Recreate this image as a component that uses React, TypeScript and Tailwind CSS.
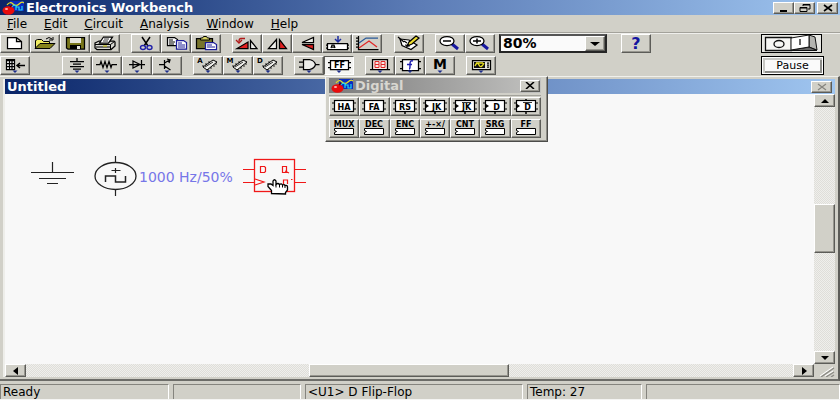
import React from "react";

const raised =
  "border border-t-white border-l-white border-r-[#5c5c58] border-b-[#5c5c58] bg-[#d1d0c8] shadow-[inset_-1px_-1px_0_#97968f]";
const sunken =
  "border border-t-[#5c5c58] border-l-[#5c5c58] border-r-white border-b-white bg-[#f4f4f2]";
const checker =
  "bg-[repeating-conic-gradient(#efefec_0_25%,#dfded9_0_50%)] bg-[length:2px_2px]";

type ToolProps = { label: string; pressed?: boolean; menu?: boolean; children: React.ReactNode };

function Tool({ label, pressed, menu, children }: ToolProps) {
  return (
    <button
      type="button"
      aria-label={label}
      className={`h-[19px] w-[30px] shrink-0 ${pressed ? sunken : raised}`}
    >
      <svg viewBox="1 1 28 17" className="block h-[17px] w-7" fill="none" stroke="#000" strokeWidth="1.250">
        {children}
        {menu && <path d="M12.500 14.500h5L15 17z" fill="#1c2c8c" stroke="none" />}
      </svg>
    </button>
  );
}

function Glyph({ x, y, size, children, fill = "#000" }: { x: number; y: number; size: number; children: string; fill?: string }) {
  return (
    <text x={x} y={y} fontSize={size} textAnchor="middle" fill={fill} stroke="none" fontWeight="700" fontFamily="'DejaVu Sans', sans-serif">
      {children}
    </text>
  );
}

function Group({ children, className = "" }: { children: React.ReactNode; className?: string }) {
  return <div className={`flex ${className}`}>{children}</div>;
}

function AppLogo() {
  return (
    <svg viewBox="0 0 22 14" className="h-[14px] w-[22px] shrink-0">
      <rect x="8" y="0" width="14" height="10" fill="#0a2bc0" />
      <path d="M5 4Q8 0 11 3T17 3T22 2" fill="none" stroke="#e8e020" strokeWidth="1.2" />
      <path d="M9 7Q12 2 15 6M14 9V6h3v3h3V5" fill="none" stroke="#20d8f0" strokeWidth="1.2" />
      <ellipse cx="6.500" cy="9.500" rx="6" ry="4.200" fill="#e80c0c" />
      <path d="M8 6l2-2" stroke="#600" strokeWidth="1.500" />
      <ellipse cx="4.500" cy="8" rx="1.600" ry="1" fill="#ffb0a8" />
    </svg>
  );
}

function Ram({ letter }: { letter: string }) {
  return (
    <>
      <path d="M10 11L20 4l4 2L14 14z" fill="#eeeeea" strokeWidth="1" />
      <path d="M10 9v2M13 7v2M16 5v2M15 13v2M18 11v2M21 9v2M23 7v2M12 11l8-5" strokeWidth="0.800" />
      <Glyph x={7} y={7} size={7}>{letter}</Glyph>
    </>
  );
}

function Lens({ plus }: { plus?: boolean }) {
  return (
    <>
      <path d="M17 10l6 5" stroke="#1818a0" strokeWidth="3" />
      <ellipse cx="12" cy="7" rx="7" ry="4.500" fill="#fff" />
      <path d={plus ? "M8 7h8M12 4.500v5" : "M8 7h8"} strokeWidth="1.500" />
    </>
  );
}

type ChipProps = { text: string; clocked?: boolean; bar?: boolean; vertical?: boolean };

function Chip({ text, clocked, bar, vertical }: ChipProps) {
  return (
    <>
      <rect x="5.500" y="3.500" width="19" height="11" fill="#fff" strokeWidth="1.200" />
      <path d="M3 6h2M3 12h2M25 6h2M25 12h2" />
      {vertical && <path d="M15 2v1M15 15v2" strokeWidth="1.500" />}
      {clocked && <path d="M6 7l3 2-3 2z" fill="#000" stroke="none" />}
      {bar && <path d="M12 5.500h9" strokeWidth="0.800" />}
      <Glyph x={clocked ? 16.5 : 15} y={12.5} size={8}>{text}</Glyph>
    </>
  );
}

const palette: (ChipProps & { label: string })[] = [
  { label: "Half adder", text: "HA" },
  { label: "Full adder", text: "FA" },
  { label: "RS flip-flop", text: "RS", vertical: true },
  { label: "JK flip-flop", text: "JK", clocked: true, vertical: true },
  { label: "JK flip-flop, active low", text: "JK", clocked: true, bar: true, vertical: true },
  { label: "D flip-flop", text: "D", clocked: true, vertical: true },
  { label: "D flip-flop, active low", text: "D", clocked: true, bar: true, vertical: true },
];

const families = ["MUX", "DEC", "ENC", "+-×/", "CNT", "SRG", "FF"];

function Palette() {
  const cell = `h-[19px] min-w-0 ${raised}`;
  return (
    <section
      aria-label="Digital"
      className="absolute left-[325px] top-[76px] w-[223px] border border-l-[#f4f4f2] border-t-[#f4f4f2] border-r-[#4c4c4a] border-b-[#4c4c4a] bg-[#d1d0c8] pb-[3px] pl-[3px] pr-[6px] pt-px shadow-[inset_-1px_-1px_0_#8c8b85]"
    >
      <header className="flex h-[15px] items-center bg-linear-to-r from-[#7c7c7c] to-[#c2c2c0] pl-0.5 pr-px">
        <AppLogo />
        <h2 className="ml-0.5 flex-1 text-[13px] font-bold leading-[15px] text-[#d8d6d0]">Digital</h2>
        <button type="button" aria-label="Close palette" className={`flex h-3 w-5 items-center justify-center ${raised}`}>
          <svg viewBox="0 0 10 7" className="h-[7px] w-[10px]"><path d="M1 0l8 7M9 0L1 7" stroke="#000" strokeWidth="1.600" /></svg>
        </button>
      </header>
      <div className="mt-0.5 grid grid-cols-7 border-t border-[#a3a29b] pt-px">
        {palette.map(({ label, ...chip }) => (
          <button key={label} type="button" aria-label={label} className={cell}>
            <svg viewBox="1 1 28 17" className="block h-[17px] w-7" fill="none" stroke="#000">
              <Chip {...chip} />
            </svg>
          </button>
        ))}
      </div>
      <div className="mt-[3px] grid grid-cols-7">
        {families.map((f) => (
          <button key={f} type="button" aria-label={f} className={cell}>
            <svg viewBox="1 1 28 17" className="block h-[17px] w-7" fill="none" stroke="#000">
              <Glyph x={15} y={8} size={8}>{f}</Glyph>
              <path d="M5.500 9.500h19v6h-19v-2l2-1-2-1z" fill="#fff" />
            </svg>
          </button>
        ))}
      </div>
    </section>
  );
}

function Schematic() {
  return (
    <svg className="absolute left-0 top-0 h-[130px] w-[320px]" viewBox="5 94 320 130" fill="none" stroke="#222">
      <path d="M52.500 162v10M31 172.500h43M39 178.500h27M47 183.500h11" strokeWidth="1.200" />
      <ellipse cx="115.500" cy="176" rx="20.500" ry="13.500" strokeWidth="1.300" />
      <path d="M115.500 156v7M115.500 189v7M111.500 170.500h9M115.500 168v5" strokeWidth="1.200" />
      <path d="M105.500 182v-6h10v6h10v-6" strokeWidth="1.500" />
      <text x="139" y="182" fontSize="14" fill="#7676e8" stroke="none" fontFamily="'DejaVu Sans', sans-serif">1000 Hz/50%</text>
      <g stroke="#f01818">
        <rect x="254.500" y="159.500" width="40" height="32" strokeWidth="1.300" />
        <path d="M243 169.500h11M243 182.500h11M295 169.500h11M295 182.500h11M255 179l9 3-9 3M260.500 166.500h4l1 1v4l-1 1h-4zM282.500 166.500h4v6h-4zM285 171l4 2M283.500 184v-4h4v4M291 179.500h1.500" strokeWidth="1.200" />
      </g>
      <path
        d="M271.500 193.500v-3l-3.500-4v-2.500h3l2 1.500v-4.500q1.500-2.500 3 0v3.500q2-2 3.500 0q2-1.500 3 .500q2-1 2.500.500q2.500-.500 2.500 1.500v3l-2 2.500v1.500z"
        fill="#fff"
        stroke="#000"
        strokeWidth="1.300"
      />
      <path d="M276 184.500v3M279.500 184.500v3M282.500 185v2.500M285 185.500v2.500" stroke="#000" />
    </svg>
  );
}

function Arrow({ d }: { d: string }) {
  return <svg viewBox="0 0 10 8" className="h-2 w-[10px]"><path d={d} /></svg>;
}

function ScrollButton({ label, d }: { label: string; d: string }) {
  return (
    <button type="button" aria-label={label} className={`flex h-[13px] w-[21px] shrink-0 items-center justify-center ${raised}`}>
      <Arrow d={d} />
    </button>
  );
}

const menus = ["File", "Edit", "Circuit", "Analysis", "Window", "Help"];
const titleBar = "bg-linear-to-r from-[#0a2468] via-[#5c7cb6] to-[#a0c6f0]";

export default function App() {
  return (
    <div className="relative flex h-screen flex-col overflow-hidden bg-[#d1d0c8] font-['DejaVu_Sans',sans-serif] text-[12px] text-black">
      <header className={`flex h-[15px] shrink-0 items-center pl-0.5 pr-0.5 ${titleBar}`}>
        <AppLogo />
        <h1 className="ml-0.5 flex-1 text-[13px] font-bold leading-[15px] text-white">Electronics Workbench</h1>
        <button type="button" aria-label="Minimize" className={`flex h-3 w-[21px] items-center justify-center ${raised}`}>
          <svg viewBox="0 0 12 8" className="h-2 w-3"><path d="M2 6h7v2H2z" /></svg>
        </button>
        <button type="button" aria-label="Restore" className={`flex h-3 w-[21px] items-center justify-center ${raised}`}>
          <svg viewBox="0 0 12 8" className="h-2 w-3" fill="none" stroke="#000"><path d="M4 2V.500h7v4.500H9M1 3.500h7v4H1zM4 1h7M1 4h7" /></svg>
        </button>
        <button type="button" aria-label="Close" className={`ml-0.5 flex h-3 w-[21px] items-center justify-center ${raised}`}>
          <svg viewBox="0 0 12 8" className="h-2 w-3"><path d="M2 1l8 6M10 1L2 7" stroke="#000" strokeWidth="1.600" /></svg>
        </button>
      </header>

      <nav className="flex h-[18px] shrink-0 items-center gap-[17px] border-b border-[#a3a29b] pl-[7px]">
        {menus.map((m) => (
          <button key={m} type="button" className="leading-4">
            <span className="underline underline-offset-1">{m[0]}</span>
            {m.slice(1)}
          </button>
        ))}
      </nav>

      <div className="flex shrink-0 justify-between border-t border-[#efefec] pr-4">
        <div className="flex flex-col gap-[3px] pb-px">
          <div className="flex gap-[11px]">
            <Group>
              <Tool label="New"><path d="M7.500 3.500h9l5 4v7h-14zM16.500 3.500v4h5" fill="#fff" /></Tool>
              <Tool label="Open">
                <path d="M5.500 14.500v-8l2-1h4l2 2h6v2" fill="#f0ec60" strokeWidth="1" />
                <path d="M5 14.500L10 9.500h15l-5 5z" fill="#86841c" strokeWidth="1" />
                <path d="M16 5q3-3 6 0M23 3v3h-4" strokeWidth="1" />
              </Tool>
              <Tool label="Save">
                <path d="M6.500 3.500h18v11.500H8l-1.500-1z" fill="#77751a" />
                <path d="M10 4h11v5H10z" fill="#e4e4dc" stroke="none" />
                <path d="M10 11h11v4H10z" fill="#000" stroke="none" />
                <path d="M17 12h3v3h-3z" fill="#e4e4dc" stroke="none" />
              </Tool>
              <Tool label="Print">
                <path d="M5 9l4-2h15l1 1v4l-4 3.500H7L5 14z" fill="#d8d8d2" />
                <path d="M9.500 9l4-6h9l-4 6z" fill="#fff" />
                <path d="M14 5h5M13 7h5" strokeWidth="0.800" />
                <path d="M5 10.500h15.500l4-3M20.500 10.500v5M6 13h14" strokeWidth="1" />
                <path d="M13 12h4" stroke="#c8c020" />
              </Tool>
            </Group>
            <Group>
              <Tool label="Cut">
                <path d="M11 3l6 9M19 3l-6 9" strokeWidth="1.500" />
                <ellipse cx="12" cy="13.500" rx="2.500" ry="2" stroke="#2020a8" strokeWidth="1.400" />
                <ellipse cx="18.500" cy="13.500" rx="2.500" ry="2" stroke="#2020a8" strokeWidth="1.400" />
              </Tool>
              <Tool label="Copy">
                <path d="M6.500 3.500h7l3 2v6h-10z" fill="#fff" />
                <path d="M8 6h4M8 8h6M8 10h5" strokeWidth="1" />
                <path d="M15.500 6.500h7l3 2v6.500h-10z" fill="#fff" stroke="#1c1c98" />
                <path d="M17 9h4M17 11h7M17 13h7" stroke="#1c1c98" strokeWidth="1" />
              </Tool>
              <Tool label="Paste">
                <path d="M5.500 4.500h16v10h-16z" fill="#77742c" />
                <path d="M9.500 6v-2h2l1-1.500h3l1 1.500h2v2z" fill="#d8d464" strokeWidth="1" />
                <path d="M14.500 8.500h8l3 2v5h-11z" fill="#fff" stroke="#1c1c98" />
                <path d="M16 11h5M16 13h8" stroke="#1c1c98" strokeWidth="1" />
              </Tool>
            </Group>
            <Group>
              <Tool label="Rotate">
                <path d="M5 14.500h11V8z" fill="#e02020" />
                <path d="M18.500 14.500h6.500l-6.500-8z" fill="#eeeeea" />
                <path d="M13 4.500h-4q-2 0-2 3M4 6l3 3 3-3" stroke="#b01818" strokeWidth="1.300" />
              </Tool>
              <Tool label="Flip horizontal">
                <path d="M6.500 14.500h8v-9z" fill="#eeeeea" />
                <path d="M17.500 14.500h7l-7-9z" fill="#e02020" />
              </Tool>
              <Tool label="Flip vertical">
                <path d="M10 8.500h11.500v-5z" fill="#eeeeea" />
                <path d="M10 10.500h11.500v5z" fill="#e02020" />
              </Tool>
              <Tool label="Label">
                <path d="M5.500 9.500h20v6h-20z" fill="#fff" />
                <path d="M16 2v5M13 5l3 3 3-3" stroke="#1c2ca0" strokeWidth="1.500" />
                <path d="M4 11h2M4 14h2M25 11h2M25 14h2M9 14l1-3h2l1 3M10 13h3" />
              </Tool>
              <Tool label="Display graphs">
                <path d="M6.500 2v13.500h20M4 4h2M4 7h2M4 10h2M4 13h2" />
                <path d="M7 9l7-5h12" stroke="#285898" />
                <path d="M7 14l10-7 8 6" stroke="#e02828" />
              </Tool>
            </Group>
            <Group className="ml-px">
              <Tool label="Component properties">
                <path d="M6 5l9 1 8 5-6 4.500-9-4z" fill="#fff" />
                <path d="M4 3l6 5M10 7l3 2M11 11l5 1" />
                <path d="M13 12l2-4 7-6 3 2-7 6z" fill="#eddc30" />
                <path d="M13 12l2-1" strokeWidth="2" />
              </Tool>
            </Group>
            <Group>
              <Tool label="Zoom out"><Lens /></Tool>
              <Tool label="Zoom in"><Lens plus /></Tool>
              <label className="relative ml-1 flex h-[19px] w-[108px] border-2 border-[#262626] border-t-[#555] bg-[#fafafa]">
                <select aria-label="Zoom" defaultValue="80%" className="h-[15px] w-full appearance-none bg-transparent pl-0.5 text-[14px] font-bold leading-[15px]">
                  <option>50%</option>
                  <option>80%</option>
                  <option>100%</option>
                </select>
                <span className={`pointer-events-none absolute right-0 top-0 flex h-[15px] w-5 items-center justify-center ${raised}`}>
                  <Arrow d="M0 2h10l-5 4z" />
                </span>
              </label>
            </Group>
            <Group className="ml-[3px]">
              <Tool label="Help"><Glyph x={15} y={15} size={16} fill="#1414a0">?</Glyph></Tool>
            </Group>
          </div>

          <div className="flex gap-[11px]">
            <Group className="mr-[21px]">
              <Tool label="Favorites" menu>
                <path d="M6.500 3.500h8v10h-8z" fill="#fff" />
                <path d="M6 4.500h9M7 7.500h8M7 10.500h8M9.500 5v9M12 5v9" />
                <path d="M17 9.500h8M20 7l-3 2.500 3 2.500" strokeWidth="1.500" />
              </Tool>
            </Group>
            <Group>
              <Tool label="Sources" menu><path d="M15 2v3M8 5.500h14M11 8h8M8 10.500h14M11 13h8" /></Tool>
              <Tool label="Basic" menu><path d="M4 8.500h4l1-3 2 6 2-6 2 6 2-6 2 6 1-3h5" /></Tool>
              <Tool label="Diodes" menu><path d="M7 8.500h16M11 5l7 3.500L11 12zM19.500 4v9" /></Tool>
              <Tool label="Transistors" menu><path d="M7 8.500h5M12.500 4v9M12.500 7l6-3.500M12.500 10l6 4M15 3l3 1-1 3" /></Tool>
            </Group>
            <Group>
              <Tool label="Analog ICs" menu><Ram letter="A" /></Tool>
              <Tool label="Mixed ICs" menu><Ram letter="M" /></Tool>
              <Tool label="Digital ICs" menu><Ram letter="D" /></Tool>
            </Group>
            <Group>
              <Tool label="Logic gates" menu><path d="M9.500 3.500h6q5 1 6 5q-1 4-6 5h-6zM5 6h4M5 11h4M21.500 8.500h4" fill="#eeeeea" /></Tool>
              <Tool label="Digital" pressed menu>
                <path d="M6.500 4.500h18v9h-18zM4 6.500h2M4 11.500h2M25 6.500h2M25 11.500h2" fill="#fff" />
                <Glyph x={15.5} y={12} size={8}>FF</Glyph>
              </Tool>
            </Group>
            <Group>
              <Tool label="Indicators" menu>
                <path d="M7.500 3.500h15v10h-15zM5 13.500h20" fill="#f8e8e4" />
                <path d="M10 5.500h4v3h-4zM16 5.500h4v3h-4zM10 8.500h4v3h-4zM16 8.500h4v3h-4z" stroke="#e02828" strokeWidth="1" />
              </Tool>
              <Tool label="Controls" menu>
                <path d="M7.500 3.500h16v11h-16zM5 5.500h2M5 12.500h2M24 5.500h2M24 12.500h2" fill="#fff" />
                <path d="M18 5q-3-1-3 3v2q0 3-1 3M12 8.500h5" stroke="#2020b0" strokeWidth="1.500" />
              </Tool>
              <Tool label="Miscellaneous" menu><Glyph x={15} y={13} size={14}>M</Glyph></Tool>
            </Group>
            <Group>
              <Tool label="Instruments" menu>
                <path d="M6.500 4.500h18v9h-18z" fill="#e4e4dc" />
                <path d="M8 6h11v6H8z" fill="#101010" stroke="none" />
                <path d="M9 10q2-5 4-1t5-2M10 7h7" stroke="#e8e020" strokeWidth="1.400" />
                <path d="M21 7h2M21 9h2M21 11h2" />
              </Tool>
            </Group>
          </div>
        </div>

        <div className="flex flex-col items-start gap-[3px]">
          <button type="button" aria-label="Power switch" className="h-[19px] w-[61px] border border-black bg-[#e8e8e4]">
            <svg viewBox="1 1 59 17" className="block h-[17px] w-[59px]" fill="none" stroke="#111">
              <path d="M4.500 3.500h26v13h-26z" fill="#f6f6f4" strokeWidth="1.300" />
              <path d="M48 1l6 2 2 13-8-3z" fill="#b4b4b0" />
              <path d="M30 16l18-3 8 3.500H30z" fill="#666" />
              <path d="M30 4l18-3v12l-18 3z" fill="#fff" />
              <ellipse cx="18" cy="10" rx="5" ry="3.500" strokeWidth="1.300" />
              <path d="M39 5v6" strokeWidth="1.300" />
            </svg>
          </button>
          <button
            type="button"
            className="flex h-[19px] w-[63px] items-center justify-center border border-black bg-[#fafafa] text-[11px] leading-3 shadow-[inset_0_0_0_1px_#fff,inset_2px_2px_0_1px_#c8c8c4,inset_-2px_-2px_0_1px_#8c8c88]"
          >
            Pause
          </button>
        </div>
      </div>

      <main className="flex min-h-0 flex-1 flex-col border-b-2 border-r-2 border-t border-b-[#6c6c68] border-r-[#5c5c58] border-t-[#f0f0ec] pb-0.5 pr-[3px] pt-0.5">
        <div className="ml-[3px] flex min-h-0 flex-1 flex-col border-l-2 border-[#eeeeea]">
          <header className={`flex h-[15px] shrink-0 items-center pl-0.5 pr-[3px] ${titleBar}`}>
            <h2 className="flex-1 text-[13px] font-bold leading-[15px] text-white">Untitled</h2>
            <button type="button" aria-label="Close document" className={`flex h-3 w-[21px] items-center justify-center ${raised}`}>
              <svg viewBox="0 0 12 8" className="h-2 w-3"><path d="M2 1l8 6M10 1L2 7" stroke="#85847e" strokeWidth="1.200" /></svg>
            </button>
          </header>
          <div className="flex min-h-0 flex-1">
            <div className="relative flex-1 bg-[#f8f8f8]">
              <Schematic />
            </div>
            <div className={`flex w-[21px] flex-col ${checker}`}>
              <ScrollButton label="Scroll up" d="M1 6h8L5 2z" />
              <div className="flex-[98]" />
              <div className={`flex-[47] ${raised}`} />
              <div className="flex-[99]" />
              <ScrollButton label="Scroll down" d="M1 2h8L5 6z" />
            </div>
          </div>
          <div className="flex h-[13px] shrink-0">
            <div className={`flex flex-1 ${checker}`}>
              <ScrollButton label="Scroll left" d="M7 0v8L2 4z" />
              <div className="flex-[284]" />
              <div className={`flex-[198] ${raised}`} />
              <div className="flex-[285]" />
              <ScrollButton label="Scroll right" d="M3 0v8l5-4z" />
            </div>
            <svg viewBox="0 0 21 13" className="h-[13px] w-[21px]" stroke="#8c8b85" strokeWidth="1.400">
              <path d="M7 13L20 4M12 13l8-5M17 13l3-2" />
              <path d="M6 12L19 3M11 12l8-5" stroke="#fff" strokeWidth="1" />
            </svg>
          </div>
        </div>
      </main>

      <footer className="mt-[3px] grid h-4 shrink-0 grid-cols-[169fr_128fr_218fr_115fr_194fr] gap-1 border-b border-[#f4f4f2]">
        {["Ready", "", "<U1> D Flip-Flop", "Temp: 27", ""].map((s, i) => (
          <div key={i} className="min-w-0 overflow-hidden whitespace-nowrap border-l border-r border-t border-l-[#85847e] border-r-white border-t-[#85847e] pl-0.5 leading-[15px]">
            {s}
          </div>
        ))}
      </footer>

      <Palette />
    </div>
  );
}
